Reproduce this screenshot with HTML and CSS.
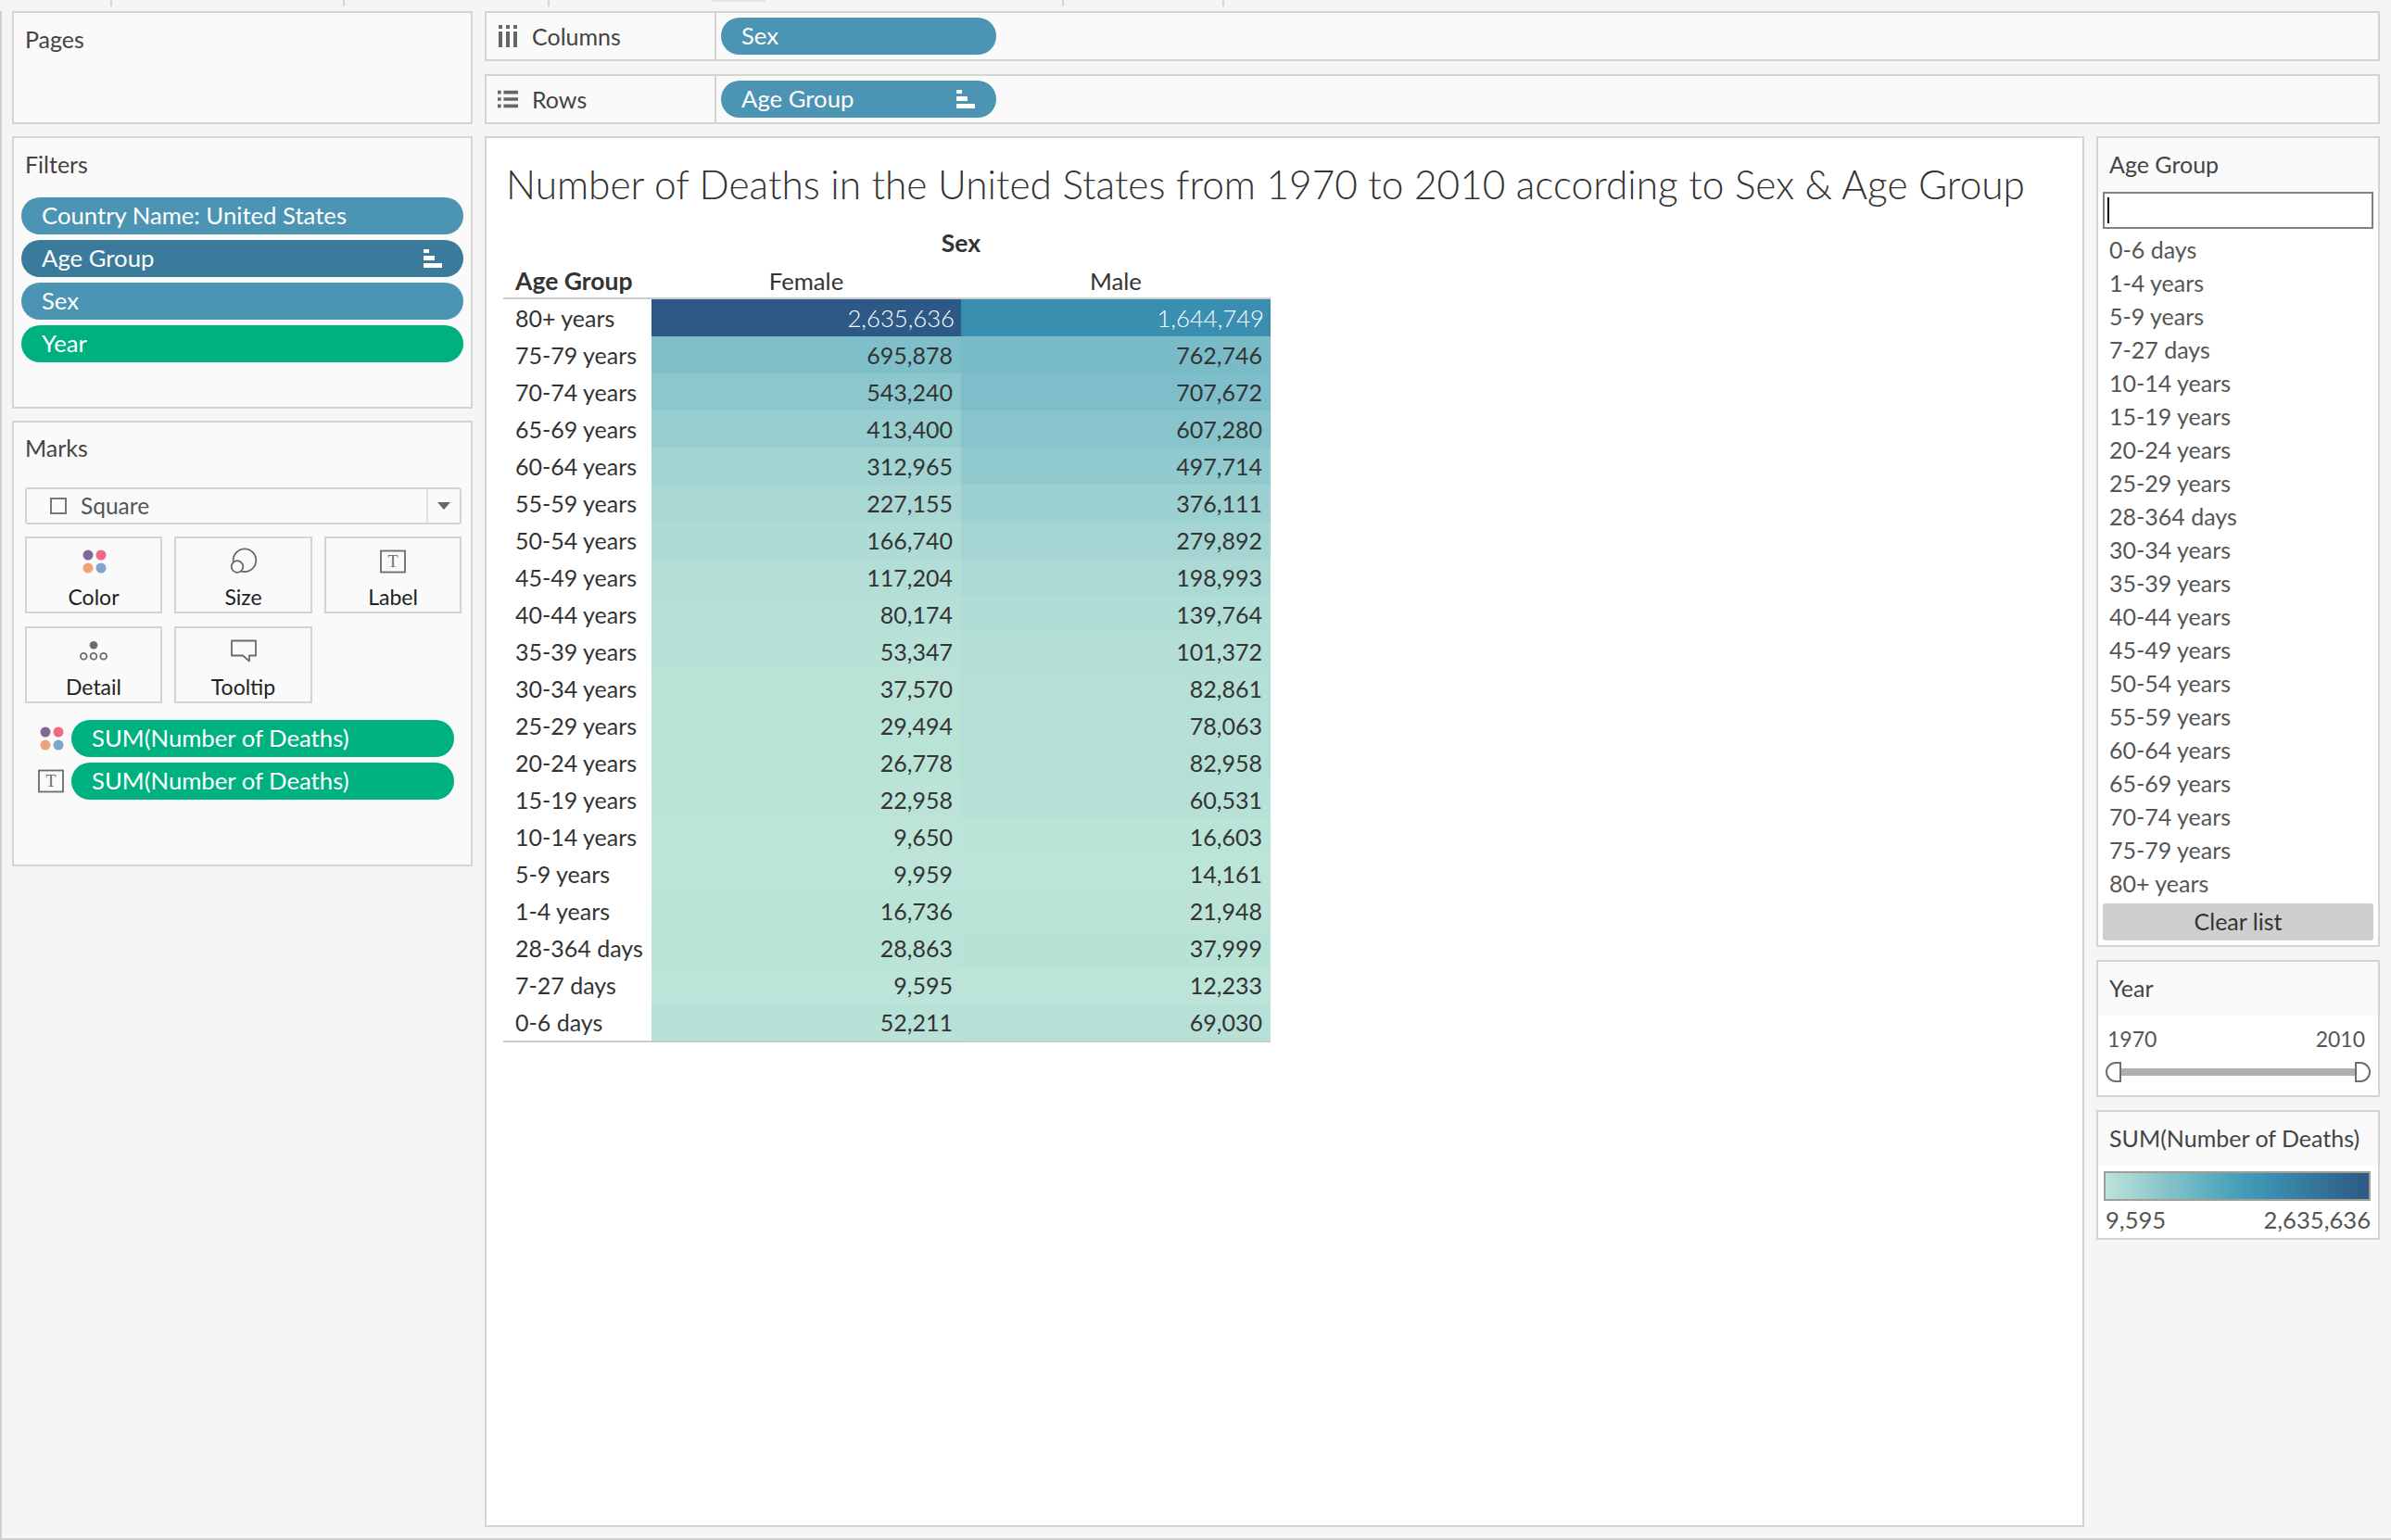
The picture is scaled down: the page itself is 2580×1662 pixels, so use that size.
FILE: index.html
```html
<!DOCTYPE html>
<html lang="en">
<head>
    <meta charset="UTF-8">
    <title>Number of Deaths in the United States</title>
    <link rel="stylesheet" href="styles.css">
</head>
<body>
    <div class="top-strip">
        <span class="tick tick-1"></span>
        <span class="tick tick-2"></span>
        <span class="tick tick-3"></span>
        <span class="tab-edge"></span>
        <span class="tick tick-4"></span>
        <span class="tick tick-5"></span>
    </div>

    <div class="workspace">
        <aside class="left-col">
            <section class="card pages-card">
                <div class="card-title">Pages</div>
            </section>

            <section class="card filters-card">
                <div class="card-title">Filters</div>
                <div class="pill-stack">
                    <div class="pill pill-blue">Country Name: United States</div>
                    <div class="pill pill-dark">Age Group
                        <svg class="sort-icon" viewBox="0 0 20 20"><path d="M0 0h6v4H0zM0 7h12v5H0zM0 15h20v5H0z"/></svg>
                    </div>
                    <div class="pill pill-blue">Sex</div>
                    <div class="pill pill-green">Year</div>
                </div>
            </section>

            <section class="card marks-card">
                <div class="card-title">Marks</div>
                <div class="mark-select">
                    <span class="mark-square"></span>
                    <span class="mark-name">Square</span>
                    <span class="mark-caret"><i></i></span>
                </div>
                <div class="mark-grid">
                    <div class="mark-btn">
                        <svg class="mark-icon" viewBox="0 0 28 28"><circle cx="8" cy="7" r="5.5" fill="#7f6a94"/><circle cx="22" cy="7" r="5.5" fill="#f0697e"/><circle cx="8" cy="21" r="5.5" fill="#eda47a"/><circle cx="22" cy="21" r="5.5" fill="#7fa5cd"/></svg>
                        <span>Color</span>
                    </div>
                    <div class="mark-btn">
                        <svg class="mark-icon" viewBox="0 0 28 28" fill="none" stroke="#6b6b6b" stroke-width="1.8"><circle cx="15" cy="12.7" r="12.3"/><circle cx="7" cy="19.5" r="6.3" fill="#fafafa"/></svg>
                        <span>Size</span>
                    </div>
                    <div class="mark-btn">
                        <svg class="mark-icon" viewBox="0 0 28 28"><rect x="1" y="2.5" width="26" height="23" fill="none" stroke="#6b6b6b" stroke-width="1.8"/><text x="14" y="20" class="t-glyph">T</text></svg>
                        <span>Label</span>
                    </div>
                    <div class="mark-btn">
                        <svg class="mark-icon" viewBox="0 0 28 28" fill="none" stroke="#6b6b6b" stroke-width="1.8"><circle cx="14" cy="7.3" r="4.3" fill="#6b6b6b" stroke="none"/><circle cx="3.3" cy="19.3" r="3.4"/><circle cx="14" cy="19.3" r="3.4"/><circle cx="24.7" cy="19.3" r="3.4"/></svg>
                        <span>Detail</span>
                    </div>
                    <div class="mark-btn">
                        <svg class="mark-icon" viewBox="0 0 28 28" fill="none" stroke="#6b6b6b" stroke-width="1.8"><path d="M1 2.5h26v16h-7v6l-7-6H1z" stroke-linejoin="round"/></svg>
                        <span>Tooltip</span>
                    </div>
                </div>
                <div class="encoding">
                    <svg class="enc-icon" viewBox="0 0 28 28"><circle cx="8" cy="7" r="5.5" fill="#7f6a94"/><circle cx="22" cy="7" r="5.5" fill="#f0697e"/><circle cx="8" cy="21" r="5.5" fill="#eda47a"/><circle cx="22" cy="21" r="5.5" fill="#7fa5cd"/></svg>
                    <div class="pill pill-green pill-enc">SUM(Number of Deaths)</div>
                </div>
                <div class="encoding">
                    <svg class="enc-icon" viewBox="0 0 28 28"><rect x="1" y="2.5" width="26" height="23" fill="none" stroke="#6b6b6b" stroke-width="1.8"/><text x="14" y="20" class="t-glyph">T</text></svg>
                    <div class="pill pill-green pill-enc">SUM(Number of Deaths)</div>
                </div>
            </section>
        </aside>

        <div class="right-area">
            <div class="shelf">
                <div class="shelf-label">
                    <svg class="shelf-icon" viewBox="0 0 22 24"><path d="M1 0h4v4H1zM9 0h4v4H9zM17 0h4v4h-4zM1 7h4v17H1zM9 7h4v17H9zM17 7h4v17h-4z"/></svg>
                    Columns
                </div>
                <div class="shelf-body">
                    <div class="pill pill-blue pill-shelf">Sex</div>
                </div>
            </div>
            <div class="shelf">
                <div class="shelf-label">
                    <svg class="shelf-icon" viewBox="0 0 24 20"><path d="M0 0h4v4H0zM7 0h17v4H7zM0 8h4v4H0zM7 8h17v4H7zM0 16h4v4H0zM7 16h17v4H7z"/></svg>
                    Rows
                </div>
                <div class="shelf-body">
                    <div class="pill pill-blue pill-shelf">Age Group
                        <svg class="sort-icon" viewBox="0 0 20 20"><path d="M0 0h6v4H0zM0 7h12v5H0zM0 15h20v5H0z"/></svg>
                    </div>
                </div>
            </div>

            <div class="content-row">
                <main class="view">
                    <h1 class="view-title">Number of Deaths in the United States from 1970 to 2010 according to Sex &amp; Age Group</h1>
                    <div class="crosstab">
                        <div class="ct-sex">Sex</div>
                        <div class="ct-head">
                            <div class="ct-agehead">Age Group</div>
                            <div class="ct-colhead">Female</div>
                            <div class="ct-colhead">Male</div>
                        </div>
                        <div id="rows" class="ct-rows"></div>
                    </div>
                </main>

                <aside class="side-col">
                    <section class="card list-card">
                        <div class="card-title side-title">Age Group</div>
                        <div class="list-body">
                            <div class="search-box"><i class="caret"></i></div>
                            <ul class="age-list">
                                <li>0-6 days</li>
                                <li>1-4 years</li>
                                <li>5-9 years</li>
                                <li>7-27 days</li>
                                <li>10-14 years</li>
                                <li>15-19 years</li>
                                <li>20-24 years</li>
                                <li>25-29 years</li>
                                <li>28-364 days</li>
                                <li>30-34 years</li>
                                <li>35-39 years</li>
                                <li>40-44 years</li>
                                <li>45-49 years</li>
                                <li>50-54 years</li>
                                <li>55-59 years</li>
                                <li>60-64 years</li>
                                <li>65-69 years</li>
                                <li>70-74 years</li>
                                <li>75-79 years</li>
                                <li>80+ years</li>
                            </ul>
                            <div class="clear-btn">Clear list</div>
                        </div>
                    </section>

                    <section class="card year-card">
                        <div class="card-title side-title">Year</div>
                        <div class="year-body">
                            <div class="year-labels"><span>1970</span><span>2010</span></div>
                            <div class="slider">
                                <span class="handle handle-left"></span>
                                <span class="track"></span>
                                <span class="handle handle-right"></span>
                            </div>
                        </div>
                    </section>

                    <section class="card legend-card">
                        <div class="card-title side-title">SUM(Number of Deaths)</div>
                        <div class="legend-body">
                            <div class="legend-bar"></div>
                            <div class="legend-labels"><span>9,595</span><span>2,635,636</span></div>
                        </div>
                    </section>
                </aside>
            </div>
        </div>
    </div>

    <script>
        const rows = [
            ["80+ years", 2635636, 1644749],
            ["75-79 years", 695878, 762746],
            ["70-74 years", 543240, 707672],
            ["65-69 years", 413400, 607280],
            ["60-64 years", 312965, 497714],
            ["55-59 years", 227155, 376111],
            ["50-54 years", 166740, 279892],
            ["45-49 years", 117204, 198993],
            ["40-44 years", 80174, 139764],
            ["35-39 years", 53347, 101372],
            ["30-34 years", 37570, 82861],
            ["25-29 years", 29494, 78063],
            ["20-24 years", 26778, 82958],
            ["15-19 years", 22958, 60531],
            ["10-14 years", 9650, 16603],
            ["5-9 years", 9959, 14161],
            ["1-4 years", 16736, 21948],
            ["28-364 days", 28863, 37999],
            ["7-27 days", 9595, 12233],
            ["0-6 days", 52211, 69030]
        ];

        // colour stops read off the legend
        const stops = [
            [0, [188, 228, 216]],
            [0.26, [127, 191, 202]],
            [0.5, [69, 160, 185]],
            [0.62, [58, 143, 176]],
            [1, [44, 89, 133]]
        ];

        function cellColor(value) {
            const t = (value - 9595) / (2635636 - 9595);
            let i = 0;
            while (i < stops.length - 2 && t > stops[i + 1][0]) i++;
            const [t0, c0] = stops[i];
            const [t1, c1] = stops[i + 1];
            const k = (t - t0) / (t1 - t0);
            const c = c0.map((v, n) => Math.round(v + (c1[n] - v) * k));
            return `rgb(${c.join(',')})`;
        }

        function cell(value) {
            const light = value > 1000000 ? ' ct-light' : '';
            return `<div class="ct-cell${light}" style="background-color:${cellColor(value)}">${value.toLocaleString('en-US')}</div>`;
        }

        document.getElementById('rows').innerHTML = rows.map(r => `
            <div class="ct-row">
                <div class="ct-label">${r[0]}</div>
                ${cell(r[1])}
                ${cell(r[2])}
            </div>
        `).join('');
    </script>
</body>
</html>
```

FILE: styles.css
```css
* {
    box-sizing: border-box;
}
html, body {
    margin: 0;
    padding: 0;
}
body {
    width: 2580px;
    height: 1662px;
    overflow: hidden;
    background-color: #f5f5f5;
    border-bottom: 2px solid #d0d0d0;
    font-family: Lato, sans-serif;
    font-size: 25px;
    color: #333;
}
.top-strip {
    position: relative;
    height: 12px;
}
.tick {
    position: absolute;
    top: 0;
    width: 2px;
    height: 7px;
    background-color: #d4d4d4;
}
.tick-1 { left: 119px; }
.tick-2 { left: 370px; }
.tick-3 { left: 591px; }
.tick-4 { left: 1146px; }
.tick-5 { left: 1319px; }
.tab-edge {
    position: absolute;
    top: 0;
    left: 768px;
    width: 58px;
    height: 2px;
    background-color: #e6e6e6;
}
.workspace {
    display: flex;
    gap: 13px;
    padding-left: 11px;
    height: 1648px;
    border-left: 2px solid #d0d0d0;
}
.left-col {
    width: 497px;
    display: flex;
    flex-direction: column;
    gap: 13px;
}
.right-area {
    width: 2045px;
    display: flex;
    flex-direction: column;
}
.card {
    background-color: #fafafa;
    border: 2px solid #d4d4d4;
}
.card-title {
    padding: 10px 12px 0;
    line-height: 36px;
    color: #444;
}
.pages-card {
    height: 122px;
}
.filters-card {
    height: 294px;
}
.marks-card {
    height: 481px;
}
.marks-card .card-title {
    padding-top: 9px;
}
.pill-stack {
    display: flex;
    flex-direction: column;
    gap: 6px;
    margin: 18px 8px 0;
}
.pill {
    display: flex;
    align-items: center;
    justify-content: space-between;
    height: 40px;
    padding: 0 23px 2px 22px;
    border-radius: 20px;
    color: #fff;
    font-size: 25.7px;
}
.pill-blue { background-color: #4c94b3; }
.pill-dark { background-color: #3a7b9b; }
.pill-green { background-color: #00b180; }
.sort-icon {
    width: 20px;
    height: 20px;
    margin-top: 2px;
    fill: #fff;
}
.mark-select {
    display: flex;
    align-items: center;
    height: 40px;
    margin: 25px 10px 0 12px;
    border: 2px solid #d4d4d4;
    border-radius: 3px;
    color: #555;
    font-size: 24.5px;
}
.mark-square {
    width: 18px;
    height: 18px;
    margin-left: 25px;
    border: 2px solid #777;
}
.mark-name {
    margin-left: 15px;
    padding-bottom: 2px;
    flex: 1;
}
.mark-caret {
    display: flex;
    align-items: center;
    justify-content: center;
    width: 36px;
    height: 100%;
    border-left: 2px solid #e2e2e2;
}
.mark-caret i {
    border-left: 7px solid transparent;
    border-right: 7px solid transparent;
    border-top: 8px solid #666;
}
.mark-grid {
    display: grid;
    grid-template-columns: 148px 149px 148px;
    grid-auto-rows: 83px;
    column-gap: 13px;
    row-gap: 14px;
    margin: 13px 10px 0 12px;
}
.mark-btn {
    display: flex;
    flex-direction: column;
    align-items: center;
    border: 2px solid #d4d4d4;
    padding-top: 11px;
    color: #222;
    font-size: 23px;
    line-height: 30px;
}
.mark-icon {
    width: 28px;
    height: 28px;
    margin-bottom: 9px;
    overflow: visible;
}
.t-glyph {
    font-family: "Liberation Serif", serif;
    font-size: 18px;
    text-anchor: middle;
    fill: #6b6b6b;
}
.encoding {
    display: flex;
    align-items: center;
    gap: 8px;
    height: 40px;
    margin: 6px 0 0 26px;
}
.mark-grid + .encoding {
    margin-top: 18px;
}
.enc-icon {
    width: 28px;
    height: 28px;
}
.pill-enc {
    width: 413px;
}
.shelf {
    display: flex;
    height: 54px;
    margin-bottom: 14px;
    background-color: #fafafa;
    border: 2px solid #d4d4d4;
}
.shelf + .shelf {
    margin-bottom: 13px;
}
.shelf-label {
    display: flex;
    align-items: center;
    width: 248px;
    padding-left: 12px;
    border-right: 2px solid #d4d4d4;
    color: #444;
}
.shelf-icon {
    width: 22px;
    height: 24px;
    margin-right: 15px;
    fill: #666;
}
.shelf-body {
    padding: 5px;
}
.pill-shelf {
    width: 297px;
}
.content-row {
    display: flex;
    gap: 13px;
    flex: 1;
}
.view {
    width: 1726px;
    height: 1501px;
    background-color: #fff;
    border: 2px solid #d4d4d4;
    padding: 0 18px;
}
.view-title {
    margin: 0;
    padding: 25px 0 0 3px;
    font-size: 42.4px;
    line-height: 50px;
    font-weight: 300;
    color: #333;
    white-space: nowrap;
}
.crosstab {
    width: 828px;
    margin-top: 17px;
}
.ct-sex {
    margin-left: 160px;
    width: 668px;
    text-align: center;
    font-size: 26.5px;
    font-weight: 700;
    line-height: 43px;
}
.ct-head {
    display: flex;
    height: 39px;
    line-height: 38px;
    border-bottom: 2px solid #ccc;
}
.ct-agehead {
    width: 160px;
    padding-left: 13px;
    font-size: 26.5px;
    font-weight: 700;
}
.ct-colhead {
    width: 334px;
    text-align: center;
    font-size: 25.7px;
}
.ct-rows {
    border-bottom: 2px solid #ccc;
}
.ct-row {
    display: flex;
    height: 40px;
    line-height: 40px;
}
.ct-label {
    width: 160px;
    padding-left: 13px;
    white-space: nowrap;
}
.ct-cell {
    width: 334px;
    padding-right: 9px;
    text-align: right;
}
.ct-light {
    color: #fff;
    padding-right: 7px;
    font-size: 25.7px;
    font-weight: 300;
}
.side-col {
    width: 306px;
    display: flex;
    flex-direction: column;
    gap: 14px;
}
.side-title {
    height: 58px;
}
.list-card {
    height: 875px;
}
.list-body {
    padding: 0 5px;
    background-color: #fff;
    height: 813px;
}
.search-box {
    height: 40px;
    background-color: #fff;
    border: 2px solid #808285;
    padding: 4px 3px;
}
.caret {
    display: block;
    width: 2px;
    height: 100%;
    background-color: #000;
}
.age-list {
    list-style: none;
    margin: 4px 0;
    padding: 0 0 0 7px;
}
.age-list li {
    height: 36px;
    line-height: 36px;
    color: #555;
}
.clear-btn {
    height: 40px;
    line-height: 38px;
    text-align: center;
    background-color: #cfcfcf;
    border-radius: 3px;
}
.year-card {
    height: 148px;
}
.year-body {
    height: 86px;
    padding: 8px 6px 0;
    background-color: #fff;
}
.year-labels {
    display: flex;
    justify-content: space-between;
    padding: 0 8px 0 4px;
    line-height: 34px;
    font-size: 23px;
    color: #555;
}
.slider {
    display: flex;
    align-items: center;
    height: 22px;
    margin-top: 8px;
    padding: 0 2px;
}
.track {
    flex: 1;
    height: 8px;
    background-color: #b0b0b0;
}
.handle {
    width: 17px;
    height: 22px;
    border: 2px solid #6f6f6f;
    background-color: #fff;
}
.handle-left {
    border-radius: 11px 0 0 11px;
}
.handle-right {
    border-radius: 0 11px 11px 0;
}
.legend-card {
    height: 140px;
}
.legend-body {
    height: 78px;
    padding: 6px 8px 0 6px;
    background-color: #fff;
}
.legend-bar {
    height: 32px;
    border: 2px solid #a09f95;
    background: linear-gradient(to right, #bce4d8, #7fbfca 26%, #45a0b9 50%, #3a8fb0 62%, #2c5985);
}
.legend-labels {
    display: flex;
    justify-content: space-between;
    line-height: 40px;
    font-size: 25.6px;
    color: #555;
    padding: 0 0 0 2px;
}
```
